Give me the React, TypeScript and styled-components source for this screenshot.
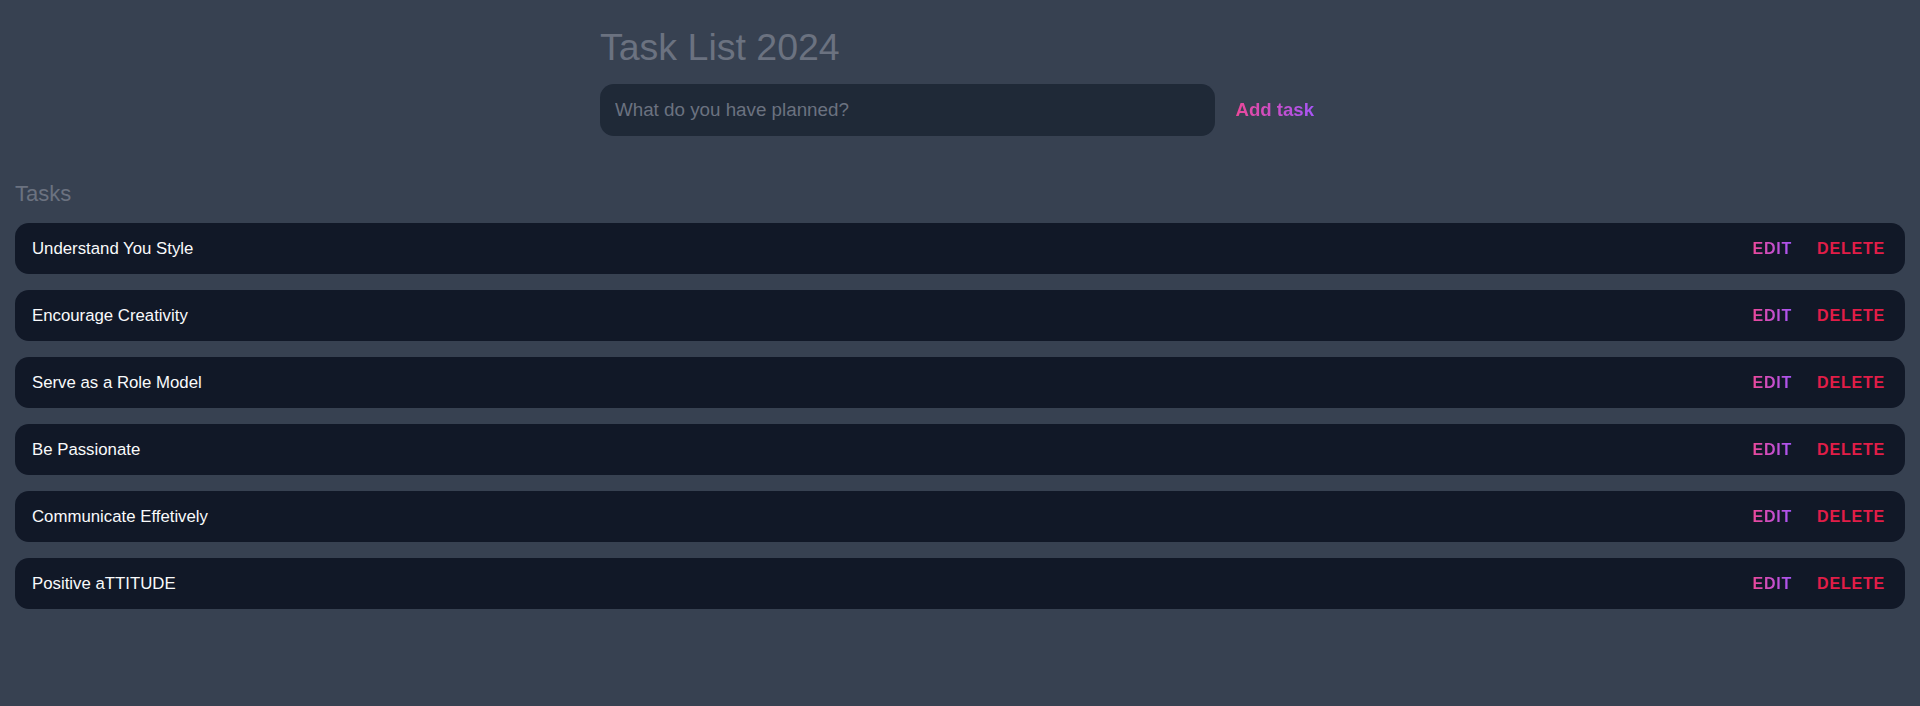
import React, { useState } from "react";
import styled, { createGlobalStyle } from "styled-components";

const GlobalStyle = createGlobalStyle`
  html, body {
    margin: 0;
    padding: 0;
    background: #374151;
    font-family: "Liberation Sans", Arial, sans-serif;
  }
  * { box-sizing: border-box; }
`;

const Page = styled.div`
  min-height: 706px;
  background: #374151;
  padding: 27px 15px 0;
`;

const Header = styled.section`
  width: 720px;
  margin: 0 auto;
  display: flex;
  flex-direction: column;
`;

const Title = styled.h1`
  margin: 0 0 17px;
  font-size: 37.5px;
  line-height: 40px;
  font-weight: 400;
  color: #6b7280;
`;

const Form = styled.form`
  display: flex;
  align-items: center;
`;

const Input = styled.input`
  flex: 1;
  height: 52px;
  border: none;
  outline: none;
  border-radius: 14px;
  background: #1f2937;
  padding: 0 15px;
  font-family: inherit;
  font-size: 18.8px;
  color: #e5e7eb;
  &::placeholder {
    color: #6b7280;
  }
`;

const GradientText = styled.span`
  background: linear-gradient(90deg, #ec4899, #a855f7);
  -webkit-background-clip: text;
  background-clip: text;
  color: transparent;
`;

const AddButton = styled.button`
  margin-left: 14px;
  padding: 0 6px;
  border: none;
  background: transparent;
  font-family: inherit;
  font-size: 18.6px;
  font-weight: 700;
  cursor: pointer;
`;

const TasksHeading = styled.h2`
  margin: 44px 0 15px;
  font-size: 22px;
  line-height: 28px;
  font-weight: 400;
  color: #6b7280;
`;

const List = styled.ul`
  list-style: none;
  margin: 0;
  padding: 0;
  display: flex;
  flex-direction: column;
  gap: 16px;
`;

const Row = styled.li`
  height: 51px;
  display: flex;
  align-items: center;
  justify-content: space-between;
  background: #111827;
  border-radius: 14px;
  padding: 0 20px 0 17px;
`;

const TaskText = styled.span`
  color: #f9fafb;
  font-size: 16.8px;
`;

const Actions = styled.div`
  display: flex;
  align-items: center;
  gap: 25px;
`;

const ActionButton = styled.button<{ $danger?: boolean }>`
  border: none;
  background: transparent;
  padding: 0;
  font-family: inherit;
  font-size: 16px;
  font-weight: 700;
  letter-spacing: 0.8px;
  text-transform: uppercase;
  color: ${(p) => (p.$danger ? "#e11d48" : "inherit")};
  cursor: pointer;
`;

const initial = [
  "Understand You Style",
  "Encourage Creativity",
  "Serve as a Role Model",
  "Be Passionate",
  "Communicate Effetively",
  "Positive aTTITUDE",
];

export default function App() {
  const [tasks] = useState(initial);
  return (
    <>
      <GlobalStyle />
      <Page>
        <Header>
          <Title>Task List 2024</Title>
          <Form onSubmit={(e) => e.preventDefault()}>
            <Input placeholder="What do you have planned?" />
            <AddButton type="submit">
              <GradientText>Add task</GradientText>
            </AddButton>
          </Form>
        </Header>
        <TasksHeading>Tasks</TasksHeading>
        <List>
          {tasks.map((t) => (
            <Row key={t}>
              <TaskText>{t}</TaskText>
              <Actions>
                <ActionButton>
                  <GradientText>Edit</GradientText>
                </ActionButton>
                <ActionButton $danger>Delete</ActionButton>
              </Actions>
            </Row>
          ))}
        </List>
      </Page>
    </>
  );
}
